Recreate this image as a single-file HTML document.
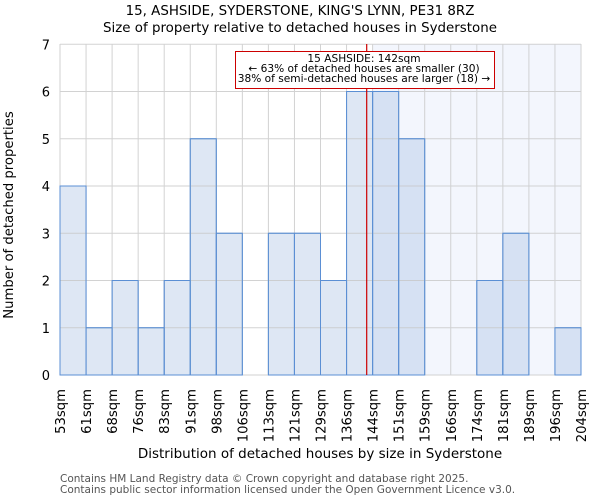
<!DOCTYPE html>
<html><head><meta charset="utf-8"><style>
html,body{margin:0;padding:0;background:#fff;width:600px;height:500px;overflow:hidden}
svg text{font-family:"DejaVu Sans","Liberation Sans",sans-serif}
</style></head><body>
<svg width="600" height="500" xmlns="http://www.w3.org/2000/svg">
<rect x="372.6" y="44" width="208.4" height="331" fill="#f3f6fd"/>
<g id="bars" stroke="#5b8fd4" stroke-width="1"></g>
<g id="grid" stroke="#c8c8c8" stroke-width="1" opacity="0.8"></g>
<g id="bars2" fill="none" stroke="#5b8fd4" stroke-width="1"></g>
<line x1="366.7" y1="44" x2="366.7" y2="375" stroke="#cc0000" stroke-width="1.2"/>
<rect x="235.5" y="51.5" width="259" height="37" fill="#fff" stroke="#cc0000" stroke-width="1"/>
<text x="364" y="62" font-size="10.6" text-anchor="middle" fill="#000">15 ASHSIDE: 142sqm</text>
<text x="364" y="72" font-size="10.6" text-anchor="middle" fill="#000">← 63% of detached houses are smaller (30)</text>
<text x="364" y="82" font-size="10.6" text-anchor="middle" fill="#000">38% of semi-detached houses are larger (18) →</text>
<text x="300" y="15" font-size="13.4" text-anchor="middle">15, ASHSIDE, SYDERSTONE, KING'S LYNN, PE31 8RZ</text>
<text x="300" y="32" font-size="13.4" text-anchor="middle">Size of property relative to detached houses in Syderstone</text>
<g id="ylab" font-size="13" text-anchor="end"></g>
<g id="xlab" font-size="13.2"></g>
<text x="320" y="458" font-size="13.5" text-anchor="middle">Distribution of detached houses by size in Syderstone</text>
<text transform="translate(13,215) rotate(-90)" font-size="13.2" text-anchor="middle">Number of detached properties</text>
<text x="60" y="482" font-size="10.5" fill="#555">Contains HM Land Registry data © Crown copyright and database right 2025.</text>
<text x="60" y="493" font-size="10.5" fill="#555">Contains public sector information licensed under the Open Government Licence v3.0.</text>
</svg>
<script>
var ns="http://www.w3.org/2000/svg";
function el(t,a,p,txt){var e=document.createElementNS(ns,t);for(var k in a)e.setAttribute(k,a[k]);if(txt!=null)e.textContent=txt;document.getElementById(p).appendChild(e);}
var c=[4,1,2,1,2,5,3,0,3,3,2,6,6,5,0,0,2,3,0,1];
var L=["53sqm","61sqm","68sqm","76sqm","83sqm","91sqm","98sqm","106sqm","113sqm","121sqm","129sqm","136sqm","144sqm","151sqm","159sqm","166sqm","174sqm","181sqm","189sqm","196sqm","204sqm"];
var x0=60,w=26.05,Y=function(v){return 375-47.25*v};
for(var i=0;i<20;i++){if(c[i]>0){el("rect",{x:x0+i*w,y:Y(c[i]),width:w,height:375-Y(c[i]),fill:i>=12?"#d6e1f3":"#dee7f4"},"bars");}}
for(var i=0;i<=20;i++){var x=x0+i*w;el("line",{x1:x,y1:44,x2:x,y2:375},"grid");
 el("text",{transform:"translate("+(x+5)+",389) rotate(-90)","text-anchor":"end"},"xlab",L[i]);}
for(var v=0;v<=7;v++){el("line",{x1:60,y1:Y(v),x2:581,y2:Y(v)},"grid");el("text",{x:50,y:Y(v)+5},"ylab",v);}
for(var i=0;i<20;i++){if(c[i]>0){el("rect",{x:x0+i*w,y:Y(c[i]),width:w,height:375-Y(c[i])},"bars2");}}
</script>
</body></html>
